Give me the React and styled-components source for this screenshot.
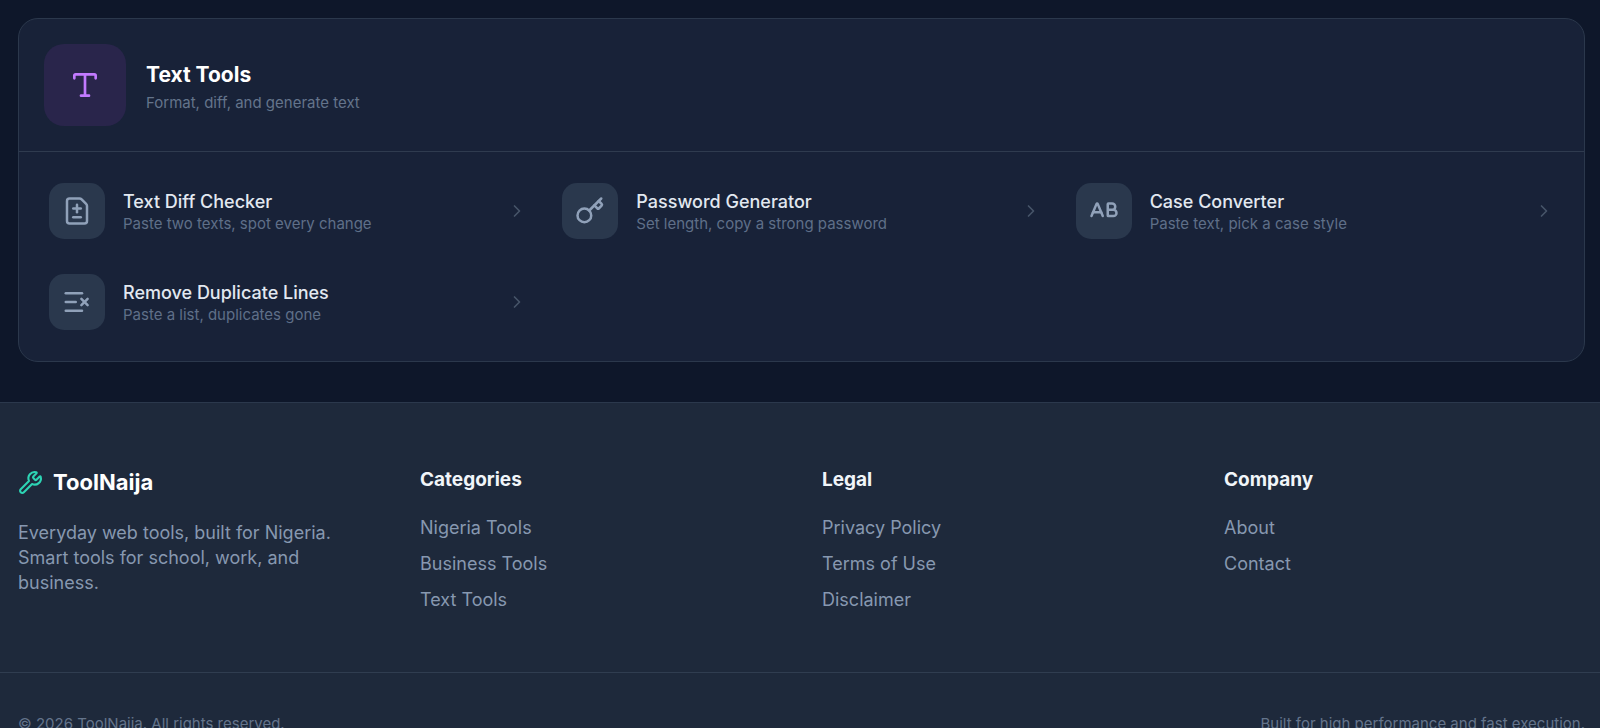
import React from 'react';
import styled, { createGlobalStyle } from 'styled-components';
import {
    CaseUpper,
    ChevronRight,
    FileDiff,
    Key,
    ListX,
    Type,
    Wrench,
} from 'lucide-react';

const GlobalStyle = createGlobalStyle`
    * {
        box-sizing: border-box;
    }

    body {
        margin: 0;
        background-color: #0e172a;
        color: #e2e8f0;
        font-family: Inter, 'Liberation Sans', sans-serif;
    }

    h2,
    h3,
    p,
    ul {
        margin: 0;
        padding: 0;
    }

    ul {
        list-style: none;
    }

    a {
        color: inherit;
        text-decoration: none;
    }
`;

const Main = styled.main`
    padding: 18px 15px 40px 18px;
`;

const Card = styled.section`
    background-color: #182238;
    border: 1px solid #2b384c;
    border-radius: 20px;
    overflow: hidden;
`;

const CardHeader = styled.header`
    display: flex;
    align-items: center;
    gap: 20px;
    padding: 25px;
    border-bottom: 1px solid #2f3b4f;

    h2 {
        color: #fff;
        font-size: 21px;
        font-weight: 700;
        line-height: 36px;
    }

    p {
        color: #64748b;
        font-size: 15px;
        line-height: 20px;
    }
`;

const CategoryIcon = styled.div`
    display: flex;
    align-items: center;
    justify-content: center;
    flex-shrink: 0;
    width: 82px;
    height: 82px;
    border-radius: 20px;
    background-color: #29254b;
    color: #c27aff;
`;

const ToolGrid = styled.ul`
    display: grid;
    grid-template-columns: repeat(3, 1fr);
    gap: 5px;
    padding: 16px 15px;
`;

const ToolLink = styled.a`
    display: flex;
    align-items: center;
    gap: 18px;
    padding: 15px;
    border-radius: 15px;

    &:hover {
        background-color: #1e293b;
    }

    .chevron {
        flex-shrink: 0;
        color: #475569;
    }
`;

const ToolIcon = styled.span`
    display: flex;
    align-items: center;
    justify-content: center;
    flex-shrink: 0;
    width: 56px;
    height: 56px;
    border-radius: 15px;
    background-color: #2a384d;
    color: #90a1b9;
`;

const ToolText = styled.span`
    flex: 1;
    min-width: 0;

    span {
        display: block;
    }

    .name {
        color: #e2e8f0;
        font-size: 18px;
        font-weight: 500;
        line-height: 25px;
    }

    .description {
        color: #5f6f88;
        font-size: 15px;
        line-height: 20px;
    }
`;

const FooterContainer = styled.footer`
    background-color: #1e293b;
    border-top: 1px solid #2b384c;
`;

const FooterColumns = styled.div`
    display: grid;
    grid-template-columns: repeat(4, 1fr);
    gap: 41px;
    padding: 64px 15px 60px 18px;
`;

const Brand = styled.div`
    a {
        display: flex;
        align-items: center;
        gap: 10px;
        color: #fff;
        font-size: 22px;
        font-weight: 700;
        line-height: 30px;

        svg {
            color: #2dd4b4;
        }
    }

    p {
        margin-top: 23px;
        color: #8798b0;
        font-size: 18px;
        line-height: 25px;
    }
`;

const FooterNav = styled.nav`
    h3 {
        color: #f1f5f9;
        font-size: 19px;
        font-weight: 700;
        line-height: 25px;
    }

    ul {
        display: flex;
        flex-direction: column;
        gap: 11px;
        margin-top: 23px;
    }

    li {
        color: #8798b0;
        font-size: 18px;
        line-height: 25px;
    }

    a:hover {
        color: #fff;
    }
`;

const FooterBottom = styled.div`
    display: flex;
    justify-content: space-between;
    padding: 41px 15px 41px 18px;
    border-top: 1px solid #303d50;
    color: #64748b;
    font-size: 15px;
    line-height: 20px;
`;

const tools = [
    {
        id: 'text-diff',
        name: 'Text Diff Checker',
        description: 'Paste two texts, spot every change',
        Icon: FileDiff,
    },
    {
        id: 'password-generator',
        name: 'Password Generator',
        description: 'Set length, copy a strong password',
        Icon: Key,
    },
    {
        id: 'case-converter',
        name: 'Case Converter',
        description: 'Paste text, pick a case style',
        Icon: CaseUpper,
    },
    {
        id: 'remove-duplicates',
        name: 'Remove Duplicate Lines',
        description: 'Paste a list, duplicates gone',
        Icon: ListX,
    },
];

const footerMenus = [
    {
        title: 'Categories',
        links: ['Nigeria Tools', 'Business Tools', 'Text Tools'],
    },
    {
        title: 'Legal',
        links: ['Privacy Policy', 'Terms of Use', 'Disclaimer'],
    },
    {
        title: 'Company',
        links: ['About', 'Contact'],
    },
];

const TextTools = () => (
    <Card>
        <CardHeader>
            <CategoryIcon>
                <Type size={32} />
            </CategoryIcon>
            <div>
                <h2>Text Tools</h2>
                <p>Format, diff, and generate text</p>
            </div>
        </CardHeader>
        <ToolGrid>
            {tools.map(({ id, name, description, Icon }) => (
                <li key={id}>
                    <ToolLink href={`#${id}`}>
                        <ToolIcon>
                            <Icon size={30} />
                        </ToolIcon>
                        <ToolText>
                            <span className="name">{name}</span>
                            <span className="description">{description}</span>
                        </ToolText>
                        <ChevronRight className="chevron" size={20} />
                    </ToolLink>
                </li>
            ))}
        </ToolGrid>
    </Card>
);

const Footer = () => (
    <FooterContainer>
        <FooterColumns>
            <Brand>
                <a href="#home">
                    <Wrench size={25} />
                    ToolNaija
                </a>
                <p>
                    Everyday web tools, built for Nigeria. Smart tools for
                    school, work, and business.
                </p>
            </Brand>
            {footerMenus.map((menu) => (
                <FooterNav key={menu.title} aria-label={menu.title}>
                    <h3>{menu.title}</h3>
                    <ul>
                        {menu.links.map((link) => (
                            <li key={link}>
                                <a href="#home">{link}</a>
                            </li>
                        ))}
                    </ul>
                </FooterNav>
            ))}
        </FooterColumns>
        <FooterBottom>
            <p>© 2026 ToolNaija. All rights reserved.</p>
            <p>Built for high performance and fast execution.</p>
        </FooterBottom>
    </FooterContainer>
);

export default function App() {
    return (
        <>
            <GlobalStyle />
            <Main>
                <TextTools />
            </Main>
            <Footer />
        </>
    );
}
